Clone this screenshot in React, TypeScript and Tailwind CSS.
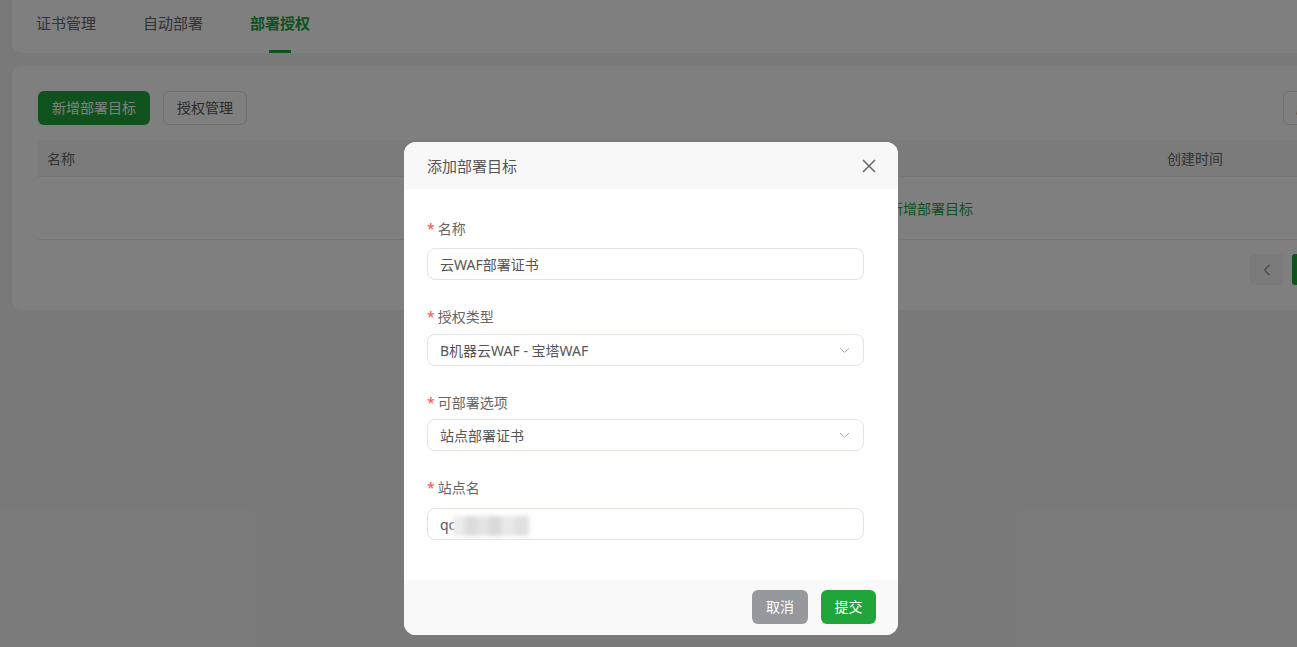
import React from "react";

function Chevron() {
  return (
    <svg width="11" height="7" viewBox="0 0 11 7" fill="none">
      <path d="M1 1L5.5 5.5L10 1" stroke="#b0b0b0" strokeWidth="1" />
    </svg>
  );
}

function Label({ text, mb }: { text: string; mb: string }) {
  return (
    <div className={`flex items-center h-[20px] leading-[20px] text-[14px] text-[#666] ${mb}`}>
      <span className="text-[#f0524f] mr-[3px] text-[14px]">*</span>
      <span>{text}</span>
    </div>
  );
}

export default function App() {
  return (
    <div className="relative w-[1297px] h-[647px] overflow-hidden bg-[#f3f3f3] font-['Noto_Sans','Noto_Sans_CJK_SC',sans-serif]">
      <div className="w-[1369px] pl-[12px]">
        {/* Tabs card */}
        <div className="h-[53px] bg-white rounded-b-[10px] flex pl-[24px] gap-[47px]">
          <div className="flex flex-col items-center pt-[13px]">
            <span className="text-[15px] leading-[20px] text-[#666]">证书管理</span>
          </div>
          <div className="flex flex-col items-center pt-[13px]">
            <span className="text-[15px] leading-[20px] text-[#666]">自动部署</span>
          </div>
          <div className="flex flex-col items-center pt-[13px]">
            <span className="text-[15px] leading-[20px] text-[#20a53a] font-bold">部署授权</span>
            <div className="mt-auto w-[22px] h-[3px] bg-[#20a53a]" />
          </div>
        </div>

        {/* Content card */}
        <div className="mt-[13px] bg-white rounded-[10px] pt-[25px] pl-[26px] pr-[26px] pb-[25px]">
          <div className="flex items-center justify-between">
            <div className="flex items-center gap-[13px]">
              <button className="h-[34px] px-[14px] rounded-[6px] bg-[#20a53a] text-white text-[14px] leading-[20px]">
                新增部署目标
              </button>
              <button className="h-[34px] px-[13px] rounded-[6px] border border-[#dcdcdc] bg-white text-[#555] text-[14px] leading-[20px]">
                授权管理
              </button>
            </div>
            <button className="h-[34px] w-[60px] px-[12px] rounded-[6px] border border-[#dcdcdc] bg-white text-[#555] text-[14px] leading-[20px] text-left">
              刷新
            </button>
          </div>

          <div className="mt-[15px]">
            <div className="flex items-center h-[37px] bg-[#f7f7f7] border-b border-[#ececec] pl-[9px] text-[14px] text-[#666]">
              <div className="w-[1120px]">名称</div>
              <div>创建时间</div>
            </div>
            <div className="flex items-center h-[63px] border-b border-[#ececec] pl-[711px] text-[14px]">
              <span className="text-[#999]">暂无部署目标，请点击</span>
              <span className="text-[#20a53a]">新增部署目标</span>
            </div>
            <div className="flex items-center gap-[9px] mt-[14px] pl-[1212px]">
              <div className="w-[33px] h-[31px] rounded-[3px] bg-[#f4f4f4] flex items-center justify-center">
                <svg width="8" height="12" viewBox="0 0 8 12" fill="none">
                  <path d="M6.5 1L1.5 6L6.5 11" stroke="#999" strokeWidth="1.2" />
                </svg>
              </div>
              <div className="w-[33px] h-[31px] rounded-[3px] bg-[#20a53a] text-white text-[13px] flex items-center justify-center">
                1
              </div>
            </div>
          </div>
        </div>
      </div>

      {/* Overlay */}
      <div className="absolute inset-0 bg-black/50" />

      {/* Modal */}
      <div className="absolute left-[404px] top-[142px] w-[494px] h-[493px] bg-white rounded-[12px] overflow-hidden flex flex-col">
        <div className="h-[47px] shrink-0 bg-[#f8f8f8] flex items-center justify-between pl-[23px] pr-[21px]">
          <span className="text-[15px] leading-[20px] text-[#555]">添加部署目标</span>
          <svg width="16" height="16" viewBox="0 0 16 16" fill="none">
            <path d="M2 2L14 14M14 2L2 14" stroke="#666" strokeWidth="1.5" />
          </svg>
        </div>

        <div className="flex-1 pl-[23px] pr-[34px] pt-[30px]">
          <Label text="名称" mb="mb-[9px]" />
          <div className="h-[32px] border border-[#e2e2ea] rounded-[8px] flex items-center px-[12px] text-[14px] text-[#555]">
            云WAF部署证书
          </div>

          <div className="mt-[27px]">
            <Label text="授权类型" mb="mb-[7px]" />
            <div className="h-[32px] border border-[#e2e2ea] rounded-[8px] flex items-center justify-between pl-[12px] pr-[13px] text-[14px] text-[#555]">
              <span>B机器云WAF - 宝塔WAF</span>
              <Chevron />
            </div>
          </div>

          <div className="mt-[27px]">
            <Label text="可部署选项" mb="mb-[6px]" />
            <div className="h-[32px] border border-[#e2e2ea] rounded-[8px] flex items-center justify-between pl-[12px] pr-[13px] text-[14px] text-[#555]">
              <span>站点部署证书</span>
              <Chevron />
            </div>
          </div>

          <div className="mt-[27px]">
            <Label text="站点名" mb="mb-[10px]" />
            <div className="relative h-[32px] border border-[#e2e2ea] rounded-[8px] flex items-center px-[12px] text-[14px] text-[#555]">
              <span>qc</span>
              <div className="absolute left-[25px] top-[7px] h-[20px] w-[76px] flex blur-[2px]">
                <div className="w-[12px] h-full bg-[#ececec]" />
                <div className="w-[12px] h-full bg-[#dcdcdc]" />
                <div className="w-[12px] h-full bg-[#e4e4e4]" />
                <div className="w-[12px] h-full bg-[#d9d9d9]" />
                <div className="w-[14px] h-full bg-[#e8e8e8]" />
                <div className="w-[14px] h-full bg-[#e0e0e0]" />
              </div>
            </div>
          </div>
        </div>

        <div className="h-[55px] shrink-0 bg-[#f9f9f9] flex items-center justify-end gap-[13px] pr-[22px] pb-[1px]">
          <button className="w-[56px] h-[34px] rounded-[6px] bg-[#96989d] text-white text-[14px] leading-[20px]">
            取消
          </button>
          <button className="w-[55px] h-[34px] rounded-[6px] bg-[#20a53a] text-white text-[14px] leading-[20px]">
            提交
          </button>
        </div>
      </div>
    </div>
  );
}
